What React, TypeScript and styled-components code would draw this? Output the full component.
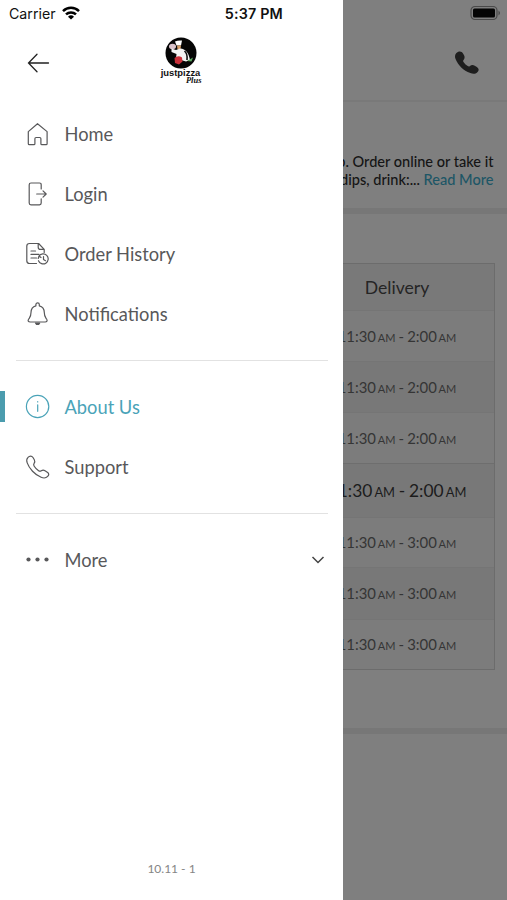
import React from "react";
import styled, { createGlobalStyle } from "styled-components";

const GlobalStyle = createGlobalStyle`
  * { box-sizing: border-box; }
  body { margin: 0; background: #7f7f7f; font-family: Lato, sans-serif; }
`;

const Screen = styled.div`
  position: relative;
  width: 507px;
  height: 900px;
  overflow: hidden;
  background: #7f7f7f;
`;

/* Dimmed page under the drawer */
const Page = styled.main`
  display: flex;
  flex-direction: column;
  height: 100%;
`;
const PageHeader = styled.header`
  height: 102px;
  padding: 5px 6px 0 0;
  display: flex;
  flex-direction: column;
  align-items: flex-end;
  border-bottom: 2px solid #797979;
`;
const CallIcon = styled.svg`
  margin: 26px 18px 0 0;
`;
const Intro = styled.section`
  height: 106px;
  padding: 51px 13.5px 0 0;
  text-align: right;
  font-size: 14.55px;
  line-height: 18px;
  font-weight: 500;
  color: #151515;
  white-space: nowrap;
`;
const ReadMore = styled.a`
  color: #1d5666;
`;
const Band = styled.div`
  height: 6px;
  flex: none;
  background: #777777;
`;
const Hours = styled.section`
  height: 514px;
  padding: 49px 12px 0 300px;
`;
const Table = styled.div`
  border: 1px solid #6c6c6c;
  border-left: 0;
`;
const TableHead = styled.div`
  height: 46px;
  display: flex;
  align-items: center;
  justify-content: center;
  background: #797979;
  color: #252525;
  font-size: 17.6px;
`;
const HourRow = styled.div<{ $h: number; $alt?: boolean; $today?: boolean }>`
  height: ${(p) => p.$h}px;
  text-align: center;
  line-height: ${(p) => p.$h - (p.$today || p.$h < 51 || p.$h > 51 ? 1 : 0)}px;
  white-space: nowrap;
  border-top: 1px solid ${(p) => (p.$today ? "#6e6e6e" : "#757575")};
  background: ${(p) => (p.$alt ? "#787878" : "#7c7c7c")};
  color: ${(p) => (p.$today ? "#1c1c1c" : "#353535")};
  font-size: ${(p) => (p.$today ? 17.4 : 14.9)}px;
  word-spacing: -0.7px;
`;
const Meridiem = styled.span`
  font-size: 0.74em;
  padding-left: 0.16em;
`;

/* Drawer */
const Drawer = styled.aside`
  position: absolute;
  inset: 0 auto 0 0;
  width: 343px;
  background: #fff;
  color: #58585a;
  display: flex;
  flex-direction: column;
`;
const StatusBar = styled.div`
  height: 28px;
  padding: 0 60px 2px 9px;
  display: flex;
  align-items: center;
  color: #111;
  font-family: Inter, sans-serif;
  font-size: 14.2px;
`;
const WifiIcon = styled.svg`
  margin-left: 6px;
`;
const Clock = styled.strong`
  margin-left: auto;
  font-weight: 600;
  font-size: 14.3px;
  letter-spacing: 0.2px;
`;
const DrawerHeader = styled.div`
  height: 76px;
  display: flex;
  padding-left: 27px;
`;
const BackIcon = styled.svg`
  margin-top: 24px;
`;
const Brand = styled.div`
  width: 42px;
  margin: 9px 0 0 109.500px;
  display: flex;
  flex-direction: column;
  align-items: center;
  color: #111;
`;
const BrandName = styled.span`
  font: bold 9.4px/8px "Liberation Sans", sans-serif;
`;
const BrandPlus = styled.span`
  align-self: flex-end;
  font: italic bold 8.5px/7px "Liberation Serif", serif;
`;
const Menu = styled.nav`
  display: flex;
  flex-direction: column;
`;
const MenuItem = styled.a<{ $active?: boolean }>`
  height: 60px;
  padding: 0 16px 0 25px;
  display: flex;
  align-items: center;
  font-size: 18.3px;
  color: ${(p) => (p.$active ? "#4aa3b8" : "#58585a")};
  position: relative;
  &::before {
    content: "";
    display: ${(p) => (p.$active ? "block" : "none")};
    position: absolute;
    left: 0;
    top: 14px;
    width: 5px;
    height: 31px;
    background: #4b9cae;
  }
`;
const ItemIcon = styled.svg`
  width: 26px;
  height: 26px;
  flex: none;
  margin-right: 13.5px;
  fill: none;
  stroke: currentColor;
  stroke-width: 1.2;
  stroke-linecap: round;
  stroke-linejoin: round;
`;
const Chevron = styled.svg`
  margin-left: auto;
  margin-right: 2px;
`;
const Divider = styled.hr`
  width: 312px;
  height: 1px;
  margin: 16px 0 16px 16px;
  border: 0;
  background: #e2e2e2;
`;
const Version = styled.footer`
  margin-top: auto;
  height: 42px;
  text-align: center;
  font-size: 12px;
  line-height: 22px;
  color: #858585;
`;

const hours = [
  { close: "2:00", h: 51 },
  { close: "2:00", h: 51, alt: true },
  { close: "2:00", h: 51 },
  { close: "2:00", h: 54, alt: true, today: true },
  { close: "3:00", h: 50 },
  { close: "3:00", h: 52, alt: true },
  { close: "3:00", h: 50 },
];

const primary = [
  {
    label: "Home",
    icon: <path d="M3.3 10.6 12.5 2.700l9.600 7.900v12.100q0 1-1 1h-4.200q-1 0-1-1v-5q0-1.200-1.200-1.200h-3.600q-1.200 0-1.200 1.200v5q0 1-1 1H4.300q-1 0-1-1z" />,
  },
  {
    label: "Login",
    icon: <path d="M16.2 8V3.7q0-1.7-1.7-1.7H6q-1.8 0-1.8 1.8V22q0 1.8 1.8 1.8h8.5q1.7 0 1.7-1.7v-4.3M11.7 13H21m-3-3.2 3.2 3.2-3.2 3.2" />,
  },
  {
    label: "Order History",
    icon: (
      <>
        <path d="M11.5 22.5H4.5q-2.7 0-2.7-2.7V5.1q0-2.6 2.7-2.6h9.1l5.6 5.8v3.2M13.2 2.8v3.4q0 2.2 2.2 2.2h3.4M6 10h4.5M6 13.4h8M6 17h5.5" />
        <path d="M14 15.2a5 5 0 1 1-.5 4.5M13.2 17.5l.8-2.5 2 1.5M18.5 15.5v3l2 1.2" />
      </>
    ),
  },
  {
    label: "Notifications",
    icon: (
      <>
        <path d="M10.9 4.800V3.600a1.700 1.700 0 0 1 3.400 0v1.200c3.300.800 5 3.400 5 6.800 0 4 1 4.600 2.300 6.400 1.200 1.800.2 3-1.500 3H5.200c-1.800 0-2.800-1.200-1.500-3C5 16.200 6 15.600 6 11.600c0-3.400 1.600-6 4.900-6.800z" />
        <path d="M10.500 22h4.200l-1 1.500h-2.200z" fill="currentColor" />
      </>
    ),
  },
];

const Handset = (
  <path d="M3 3.400c1.600-1.800 3.700-1.900 5 .1l1.300 2.200c1 1.700.6 2.700-.3 3.900-.7 1-.5 1.600.2 2.600 1 1.600 2.600 3.200 4.400 4.500 1 .7 1.700.8 2.700.1 1.200-.8 2.200-1 3.700 0l2.300 1.500c1.800 1.200 1.900 2.500.4 4.100-1.700 1.800-4 2-6.600.9C9.800 20.700 4.200 14.500 2.200 8.900c-.8-2.200-.6-4.100.8-5.500z" />
);

export default function App() {
  return (
    <>
      <GlobalStyle />
      <Screen>
        <Page>
          <PageHeader>
            <svg width="32" height="16" viewBox="0 0 32 16">
              <rect x="2" y="1.500" width="26" height="13" rx="4" fill="none" stroke="#4a4a4a" strokeWidth="1.200" />
              <rect x="4" y="3.500" width="22" height="9" rx="1.500" fill="#050505" />
              <path d="M29.500 5.500q3 2.500 0 5z" fill="#484848" />
            </svg>
            <CallIcon width="32" height="32" viewBox="0 0 26 26">
              <path fill="#1e1e1e" d="M4.200 5c2-1.900 4.500-1.700 5.700.4l.8 1.600c.7 1.500.3 2.600-.5 3.500-.5.600-.5 1 .1 1.800.9 1.300 2 2.300 3.300 3.200.7.500 1.200.5 1.800-.1 1.200-.9 2.500-1 3.900-.2l1.700 1c1.800 1.100 2 2.800.4 4.300-1.500 1.400-3.400 1.600-5.700.6C10 19.300 5.800 14.800 3.700 9.800 3 8 3.100 6.200 4.200 5z" />
            </CallIcon>
          </PageHeader>
          <Intro>
            <div>p. Order online or take it</div>
            <div>
              dips, drink:... <ReadMore>Read More</ReadMore>
            </div>
          </Intro>
          <Band />
          <Hours>
            <Table>
              <TableHead>Delivery</TableHead>
              {hours.map((r, i) => (
                <HourRow key={i} $h={r.h} $alt={r.alt} $today={r.today}>
                  11:30<Meridiem>AM</Meridiem> - {r.close}<Meridiem>AM</Meridiem>
                </HourRow>
              ))}
            </Table>
          </Hours>
          <Band />
        </Page>

        <Drawer>
          <StatusBar>
            Carrier
            <WifiIcon width="18" height="14" viewBox="0 0 18 14" fill="none" stroke="#000" strokeWidth="2.500">
              <path d="M1 5.100a11.500 11.500 0 0 1 16 0M4 8.400a7.200 7.200 0 0 1 10 0" />
              <path d="M9 13.600 6 10.700a4.300 4.300 0 0 1 6 0z" fill="#000" stroke="none" />
            </WifiIcon>
            <Clock>5:37 PM</Clock>
          </StatusBar>
          <DrawerHeader>
            <BackIcon width="23" height="22" viewBox="0 0 23 22" fill="none" stroke="#222" strokeWidth="1.300" strokeLinecap="round">
              <path d="M1.500 11h20M10 2.300 1.500 11l8.500 8.700" />
            </BackIcon>
            <Brand>
              <svg width="32" height="32" viewBox="0 0 32 32">
                <circle cx="16" cy="16" r="15.500" fill="#050505" />
                <path d="M10 4.500q3-1.500 7-1l-1 5h-4.500z" fill="#fff" />
                <path d="M12 8.500h4l-.5 3.500-3 .5z" fill="#d8a06a" />
                <ellipse cx="7.500" cy="9.500" rx="3.500" ry="2.800" fill="#d9c3cb" />
                <path d="M6.500 11.500 11 13l4-1.500c6 .5 8.500 4 10 11.500l-4 1.500-10-3 .5-4.500-5-2z" fill="#f4f4f4" />
                <path d="M19.500 14c3 2.500 3 5 2.500 9" fill="none" stroke="#111" strokeWidth="1.600" />
                <path d="M9.500 21q3.500-3 7.500-.5l.5 4-3.500 3-4-1.500z" fill="#c9303a" />
                <path d="m22 24 6-3.500-1.500 4z" fill="#5cab62" />
              </svg>
              <BrandName>justpizza</BrandName>
              <BrandPlus>Plus</BrandPlus>
            </Brand>
          </DrawerHeader>
          <Menu>
            {primary.map((item) => (
              <MenuItem key={item.label}>
                <ItemIcon viewBox="0 0 26 26">{item.icon}</ItemIcon>
                {item.label}
              </MenuItem>
            ))}
            <Divider />
            <MenuItem $active>
              <ItemIcon viewBox="0 0 26 26">
                <circle cx="12.600" cy="12.500" r="11.200" />
                <path d="M12.700 10.800v6.500M12.700 7.700v.2" />
              </ItemIcon>
              About Us
            </MenuItem>
            <MenuItem>
              <ItemIcon viewBox="0 0 26 26">{Handset}</ItemIcon>
              Support
            </MenuItem>
            <Divider />
            <MenuItem>
              <ItemIcon viewBox="0 0 26 26">
                <g fill="currentColor" stroke="none">
                  <circle cx="3.500" cy="12.500" r="2.100" />
                  <circle cx="12.500" cy="12.500" r="2.100" />
                  <circle cx="21.500" cy="12.500" r="2.100" />
                </g>
              </ItemIcon>
              More
              <Chevron width="14" height="10" viewBox="0 0 14 10" fill="none" stroke="#444" strokeWidth="1.500">
                <path d="m1.500 2 5.500 5.500L12.500 2" />
              </Chevron>
            </MenuItem>
          </Menu>
          <Version>10.11 - 1</Version>
        </Drawer>
      </Screen>
    </>
  );
}
